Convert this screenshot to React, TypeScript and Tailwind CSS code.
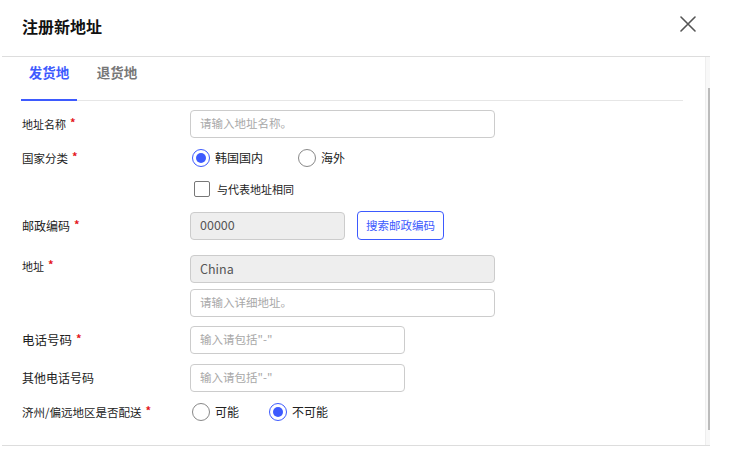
import React from "react";

const FONT = '"Noto Sans CJK SC", "Noto Sans", "Liberation Sans", sans-serif';

function Label({ text, required = true, size = "text-[11.5px]" }: { text: string; required?: boolean; size?: string }) {
  return (
    <div className={"w-[169px] pl-[1px] text-[#222] leading-[16px] flex items-start " + size}>
      <span>{text}</span>
      {required && <span className="ml-[4px] text-[#e4151b] font-bold text-[11px] leading-[12px]">*</span>}
    </div>
  );
}

function Radio({ checked, label }: { checked: boolean; label: string }) {
  return (
    <div className="flex items-center">
      <span
        className={
          checked
            ? "w-[18px] h-[18px] rounded-full border border-[#3d5afe] flex items-center justify-center"
            : "w-[18px] h-[18px] rounded-full border border-[#888]"
        }
      >
        {checked && <span className="w-[10px] h-[10px] rounded-full bg-[#3d5afe]" />}
      </span>
      <span className="ml-[5px] text-[12px] text-[#222]">{label}</span>
    </div>
  );
}

function Input({ w, placeholder, value, disabled }: { w: string; placeholder?: string; value?: string; disabled?: boolean }) {
  return (
    <div
      className={
        (disabled ? "bg-[#eeeeee] " : "bg-white ") +
        w +
        " h-[28px] border border-[#cccccc] rounded-[4px] pl-[9px] flex items-center"
      }
    >
      {value ? (
        <span className="text-[12.5px] text-[#555]">{value}</span>
      ) : (
        <span className="text-[11.5px] text-[#a8a8a8]">{placeholder}</span>
      )}
    </div>
  );
}

export default function App() {
  return (
    <div className="w-[756px] h-[456px] bg-white" style={{ fontFamily: FONT }}>
      <div className="ml-[2px] w-[708px]">
        <div className="h-[57px] border-b border-[#dddddd] flex items-start justify-between pl-[20px] pr-[14px]">
          <div className="mt-[15px] text-[16px] font-bold text-[#111] leading-[22px]">注册新地址</div>
          <svg className="mt-[16px]" width="16" height="16" viewBox="0 0 16 16" fill="none">
            <path d="M1 1L15 15M15 1L1 15" stroke="#555" strokeWidth="1.6" strokeLinecap="round" />
          </svg>
        </div>
        <div className="h-[389px] border-b border-[#dddddd] flex">
          <div className="flex-1 pl-[19px] pr-[22px]">
            <div className="h-[44px] border-b border-[#e6e6e6] flex">
              <div className="w-[56px] h-[44px] border-b-2 border-[#3d5afe] flex justify-center pt-[5px]">
                <span className="text-[13.5px] font-bold text-[#3d5afe] leading-[20px]">发货地</span>
              </div>
              <div className="ml-[12px] w-[56px] flex justify-center pt-[5px]">
                <span className="text-[13.5px] font-bold text-[#777] leading-[20px]">退货地</span>
              </div>
            </div>

            <div className="mt-[9px] flex items-center">
              <Label text="地址名称" size="text-[11px]" />
              <Input w="w-[305px]" placeholder="请输入地址名称。" />
            </div>

            <div className="mt-[6px] h-[28px] flex items-center">
              <Label text="国家分类" size="text-[11.5px]" />
              <div className="pl-[2px] flex items-center gap-[35px]">
                <Radio checked label="韩国国内" />
                <Radio checked={false} label="海外" />
              </div>
            </div>

            <div className="mt-[4px] h-[26px] flex items-center">
              <div className="w-[169px]" />
              <div className="ml-[4px] w-[16px] h-[16px] border border-[#777] rounded-[2px]" />
              <span className="ml-[7px] text-[11px] text-[#222]">与代表地址相同</span>
            </div>

            <div className="mt-[9px] flex items-center">
              <Label text="邮政编码" size="text-[12px]" />
              <Input w="w-[155px]" value="00000" disabled />
              <div className="ml-[12px] w-[87px] h-[29px] border border-[#3d5afe] rounded-[4px] flex items-center justify-center">
                <span className="text-[11.5px] text-[#3d5afe]">搜索邮政编码</span>
              </div>
            </div>

            <div className="mt-[15px] flex items-start">
              <div className="pt-[3px]">
                <Label text="地址" size="text-[11px]" />
              </div>
              <div className="flex flex-col gap-[6px]">
                <Input w="w-[305px]" value="China" disabled />
                <Input w="w-[305px]" placeholder="请输入详细地址。" />
              </div>
            </div>

            <div className="mt-[9px] flex items-center">
              <Label text="电话号码" size="text-[12.5px]" />
              <Input w="w-[215px]" placeholder={'输入请包括"-"'} />
            </div>

            <div className="mt-[10px] flex items-center">
              <Label text="其他电话号码" required={false} size="text-[12px]" />
              <Input w="w-[215px]" placeholder={'输入请包括"-"'} />
            </div>

            <div className="mt-[6px] h-[28px] flex items-center">
              <Label text="济州/偏远地区是否配送" size="text-[11.5px]" />
              <div className="pl-[2px] flex items-center gap-[30px]">
                <Radio checked={false} label="可能" />
                <Radio checked label="不可能" />
              </div>
            </div>
          </div>
          <div className="w-[5px] bg-[#f8f8f8] border-l border-[#eeeeee] flex flex-col items-end">
            <div className="mt-[31px] w-[2px] h-[342px] bg-[#bbbbbb]" />
          </div>
        </div>
      </div>
    </div>
  );
}
